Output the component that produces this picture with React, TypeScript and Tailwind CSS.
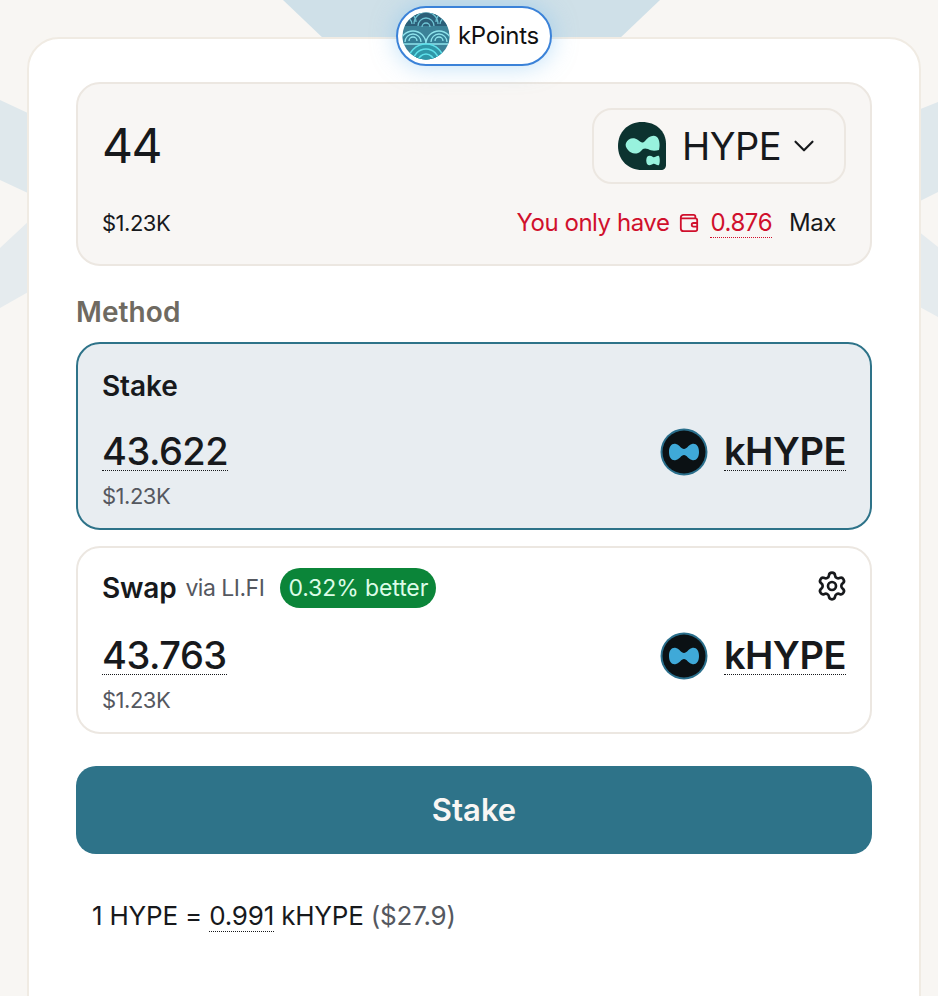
import { ChevronDown, Settings } from "lucide-react";

const font = { fontFamily: "Inter, 'Noto Sans', sans-serif" };

const KPointsLogo = () => (
  <svg width="48" height="48" viewBox="0 0 48 48">
    <defs>
      <clipPath id="kp">
        <circle cx="24" cy="24" r="23.5" />
      </clipPath>
    </defs>
    <g clipPath="url(#kp)">
      <rect width="48" height="48" fill="#3c8298" />
      <rect width="48" height="14" fill="#2c5f78" />
      <g fill="none" stroke="#6fc4d4" strokeWidth="1.3">
        <path d="M-6 10a10 10 0 0 1 20 0" />
        <path d="M-2 12a6 6 0 0 1 12 0" />
        <path d="M34 10a10 10 0 0 1 20 0" />
        <path d="M38 12a6 6 0 0 1 12 0" />
        <path d="M12 12a12 12 0 0 1 24 0" />
        <path d="M16 14a8 8 0 0 1 16 0" />
        <path d="M20 15a4 4 0 0 1 8 0" />
      </g>
      <g fill="#357f96" stroke="#8fe3ec" strokeWidth="1.3">
        <path d="M-2 32a13 13 0 0 1 26 0z" />
        <path d="M24 32a13 13 0 0 1 26 0z" />
      </g>
      <g fill="none" stroke="#8fe3ec" strokeWidth="1.3">
        <path d="M3 30a8 8 0 0 1 16 0" />
        <path d="M7 29a4 4 0 0 1 8 0" />
        <path d="M29 30a8 8 0 0 1 16 0" />
        <path d="M33 29a4 4 0 0 1 8 0" />
      </g>
      <g fill="#2f97a8" stroke="#5fe0ea" strokeWidth="1.6">
        <path d="M6 50a18 18 0 0 1 36 0z" />
        <path d="M11 50a13 13 0 0 1 26 0z" />
        <path d="M16 50a8 8 0 0 1 16 0z" />
      </g>
    </g>
  </svg>
);

const HypeLogo = () => (
  <svg width="48" height="48" viewBox="0 0 48 48">
    <path d="M24 0c14 0 24 9 24 22v21c0 3-2 5-5 5H24C10 48 0 38 0 24S10 0 24 0z" fill="#0c3330" />
    <path d="M8 21c2-5 8-6 12-3 3 2 4 4 7 1 3-4 8-7 12-4 3 3 3 9 2 13-4 1-8 1-11-1-3-1-5-1-7 2-4 4-10 3-13-1-2-2-3-5-2-7z" fill="#98f2de" />
    <path d="M29 35c2-2 4-1 6 0 2 1 4-2 6-1 1 2 1 7 0 9-2 1-4-2-6-1-2 1-4 2-6 0-1-2-1-5 0-7z" fill="#98f2de" />
  </svg>
);

const KHypeLogo = () => (
  <svg width="48" height="48" viewBox="0 0 48 48" className="shrink-0">
    <circle cx="24" cy="24" r="23.5" fill="#2a6f8c" />
    <circle cx="24" cy="24" r="21.5" fill="#0b1114" />
    <path d="M9 24c0-6 3-9 7-8 4 1 5 5 8 5s4-4 8-5c4-1 7 2 7 8s-3 9-7 8c-4-1-5-5-8-5s-4 4-8 5c-4 1-7-2-7-8z" fill="#3fa9d8" />
  </svg>
);

const Dotted = ({ children }: { children: React.ReactNode }) => (
  <span className="border-b border-dotted border-current leading-none">{children}</span>
);

const Quote = ({ amount, className }: { amount: string; className: string }) => (
  <div className={`flex items-start justify-between ${className}`}>
    <div className="flex flex-col items-start">
      <span className="border-b border-dotted border-[#17191c] text-[38px] leading-[38px] font-medium tracking-[-0.5px] text-[#17191c]">
        {amount}
      </span>
      <span className="mt-[11px] text-[22px] leading-7 tracking-[-0.5px] text-[#55585f]">$1.23K</span>
    </div>
    <div className="flex h-[39px] items-center gap-4">
      <KHypeLogo />
      <span className="border-b border-dotted border-[#17191c] text-[38px] leading-[38px] font-semibold tracking-[-0.5px] text-[#17191c]">
        kHYPE
      </span>
    </div>
  </div>
);

export default function App() {
  return (
    <div style={font} className="relative h-[996px] w-[938px] overflow-hidden bg-[#f8f6f3]">
      {/* background shapes behind the card */}
      <svg className="absolute inset-0" width="938" height="996" viewBox="0 0 938 996">
        <polygon points="283,0 660,0 618,40 325,40" fill="#cfe0e8" />
        <polygon points="0,100 30,114 30,194 0,180" fill="#dfe8ec" />
        <polygon points="0,248 30,220 30,291 0,308" fill="#e5ebee" />
        <polygon points="918,110 938,102 938,192 918,202" fill="#dfe8ec" />
        <polygon points="918,231 938,247 938,317 918,306" fill="#e5ebee" />
      </svg>

      <div className="relative pt-[37px] pr-[17px] pl-[27px]">
        <div className="h-[1000px] rounded-[32px] border-2 border-[#f0ebe3] bg-white px-[47px] pt-[43px]">
          {/* amount box */}
          <div className="h-[184px] rounded-[24px] border-2 border-[#ece7e1] bg-[#f8f6f4] pt-[24px] pr-6 pl-6">
            <div className="flex items-start justify-between">
              <span className="mt-[10px] text-[48px] leading-[56px] font-normal tracking-[-1.5px] text-[#17191c]">44</span>
              <button className="flex h-[76px] w-[254px] items-center rounded-[20px] border-2 border-[#ece7e1] pl-6 text-[38px] font-normal text-[#17191c]">
                <HypeLogo />
                <span className="ml-4 tracking-[-0.5px]">HYPE</span>
                <ChevronDown className="ml-[6px]" size={34} strokeWidth={1.5} />
              </button>
            </div>
            <div className="mt-[25px] flex items-center justify-between text-[22px] leading-7 tracking-[-0.5px]">
              <span className="text-[#17191c]">$1.23K</span>
              <div className="flex items-center pr-[10px] text-[24px] tracking-[-0.45px]">
                <span className="text-[#d0102c]">You only have</span>
                <svg className="mr-[11px] ml-[10px]" width="20" height="20" viewBox="0 0 22 22" fill="none" stroke="#d0102c" strokeWidth="2">
                  <path d="M18 6V4a2 2 0 0 0-2-2H5a3 3 0 0 0-3 3v12a3 3 0 0 0 3 3h13a2 2 0 0 0 2-2V8a2 2 0 0 0-2-2H2" />
                  <path d="M20 11h-4a2 2 0 0 0 0 4h4" />
                </svg>
                <span className="text-[#d0102c]">
                  <Dotted>0.876</Dotted>
                </span>
                <span className="ml-[17px] text-[#17191c]">Max</span>
              </div>
            </div>
          </div>

          <div className="mt-[30px] text-[28px] leading-8 font-semibold tracking-[0.1px] text-[#6f6a61]">Method</div>

          {/* stake route */}
          <div className="mt-[14px] h-[188px] rounded-[24px] border-2 border-[#2e7389] bg-[#e8edf1] px-6 pt-[26px]">
            <div className="text-[28px] leading-8 font-semibold tracking-[-0.1px] text-[#17191c]">Stake</div>
            <Quote amount="43.622" className="mt-[30px]" />
          </div>

          {/* swap route */}
          <div className="mt-[16px] h-[188px] rounded-[24px] border-2 border-[#ece7e1] bg-white px-6 pt-[20px]">
            <div className="flex h-[40px] items-center">
              <span className="text-[28px] leading-8 font-semibold tracking-[-0.2px] text-[#17191c]">Swap</span>
              <span className="ml-[9px] text-[23px] tracking-[-0.5px] text-[#55585f]">via LI.FI</span>
              <span className="ml-[16px] flex h-[40px] items-center rounded-full bg-[#0b8539] px-2 text-[23px] tracking-[-0.1px] text-[#dcfce7]">
                0.32% better
              </span>
              <Settings className="mt-[-4px] mr-[-2px] ml-auto" size={32} strokeWidth={2} color="#17191c" />
            </div>
            <Quote amount="43.763" className="mt-[28px]" />
          </div>

          <button className="mt-[32px] h-[88px] w-full rounded-[20px] bg-[#2e7389] text-[31px] font-semibold text-[#f8f6f4]">
            Stake
          </button>

          <div className="mt-[46px] pl-4 text-[26px] leading-8 tracking-[-0.2px] text-[#17191c]">
            1 HYPE = <Dotted>0.991</Dotted> kHYPE <span className="text-[#55585f]">($27.9)</span>
          </div>
        </div>
      </div>

      {/* kPoints badge over the card edge */}
      <div className="absolute top-[6px] left-[396px] flex h-[60px] w-[156px] items-center gap-2 rounded-full border-2 border-[#3b82d8] bg-white pl-1 shadow-[0_0_24px_rgba(120,190,240,0.5)]">
        <KPointsLogo />
        <span className="text-[24px] tracking-[-0.3px] text-[#111]">kPoints</span>
      </div>
    </div>
  );
}
